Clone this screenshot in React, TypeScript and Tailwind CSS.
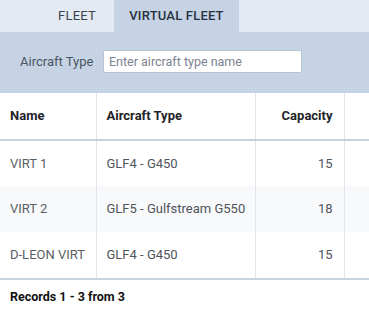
const ROWS = [
  { name: "VIRT 1", type: "GLF4 - G450", capacity: 15 },
  { name: "VIRT 2", type: "GLF5 - Gulfstream G550", capacity: 18 },
  { name: "D-LEON VIRT", type: "GLF4 - G450", capacity: 15 },
];

export default function App() {
  return (
    <div className="w-[369px] h-[317px] bg-white overflow-hidden font-['Roboto',sans-serif]">
      {/* tabs */}
      <div className="flex h-8 bg-[#e3eaf4] pl-10">
        <button className="w-[74px] text-[13px] text-[#3a4350] tracking-[0.2px]">FLEET</button>
        <button className="w-[125px] bg-[#c6d3e4] text-[13px] font-medium text-[#28323f] tracking-[0.2px]">
          VIRTUAL FLEET
        </button>
      </div>

      {/* filter */}
      <div className="h-[61px] bg-[#c6d3e4] flex items-center pl-5 pb-[2px]">
        <label className="text-[13px] text-[#4b5563] w-[83px]">Aircraft Type</label>
        <input
          className="w-[199px] h-[23px] bg-white border border-[#b8c3d1] rounded-[2px] px-[5px] text-[12.5px] text-[#333] placeholder:text-[#7b8390] outline-none"
          placeholder="Enter aircraft type name"
        />
      </div>

      {/* table */}
      <table className="w-full border-collapse table-fixed text-[13px]">
        <colgroup>
          <col className="w-[96px]" />
          <col className="w-[159px]" />
          <col className="w-[89px]" />
          <col />
        </colgroup>
        <thead>
          <tr className="h-[47px] border-b-2 border-[#c6d1e0]">
            <th className="text-left font-bold text-[#1f2328] pl-[10px] border-r border-[#e1e5ea]">Name</th>
            <th className="text-left font-bold text-[#1f2328] pl-[10px] border-r border-[#e1e5ea]">Aircraft Type</th>
            <th className="text-right font-bold text-[#1f2328] pr-[11px] border-r border-[#e1e5ea]">Capacity</th>
            <th />
          </tr>
        </thead>
        <tbody>
          {ROWS.map((r, i) => (
            <tr key={r.name} className={`h-[46px] ${i === 1 ? "bg-[#f8f9fb]" : "bg-white"}`}>
              <td className="pl-[10px] text-[#5a5f66] border-r border-[#e1e5ea] whitespace-nowrap">{r.name}</td>
              <td className="pl-[10px] text-[#4f545b] border-r border-[#e1e5ea] whitespace-nowrap">{r.type}</td>
              <td className="pr-[11px] text-right text-[#4f545b] border-r border-[#e1e5ea]">{r.capacity}</td>
              <td />
            </tr>
          ))}
        </tbody>
      </table>

      {/* footer */}
      <div className="border-t-2 border-[#c9d3e0] pl-[10px] pt-[8px] text-[12.5px] font-bold text-[#111]">
        Records 1 - 3 from 3
      </div>
    </div>
  );
}
